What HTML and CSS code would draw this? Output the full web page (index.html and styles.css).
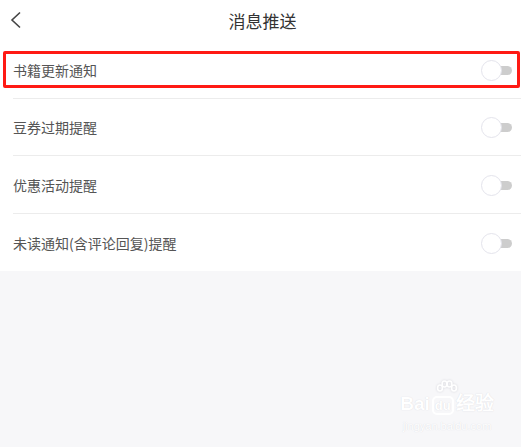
FILE: index.html
```html
<!DOCTYPE html>
<html lang="zh-CN">

<head>
    <meta charset="UTF-8">
    <meta name="viewport" content="width=device-width, initial-scale=1.0">
    <title>消息推送</title>
    <link rel="stylesheet" href="styles.css">
</head>

<body>

    <div class="page">
        <div class="header">
            <span class="back">
                <svg width="12" height="18" viewBox="0 0 12 18">
                    <path d="M10 1.5 L2 9 L10 16.5" fill="none" stroke="#444" stroke-width="1.6" />
                </svg>
            </span>
            <span class="title">消息推送</span>
        </div>

        <div class="list">
            <div class="row">
                <span class="label">书籍更新通知</span>
                <span class="switch"><i></i></span>
            </div>
            <div class="row">
                <span class="label">豆券过期提醒</span>
                <span class="switch"><i></i></span>
            </div>
            <div class="row">
                <span class="label">优惠活动提醒</span>
                <span class="switch"><i></i></span>
            </div>
            <div class="row">
                <span class="label">未读通知(含评论回复)提醒</span>
                <span class="switch"><i></i></span>
            </div>
        </div>

        <div class="highlight"></div>

        <div class="watermark">
            <span class="wm-paw">
                <svg width="22" height="16" viewBox="0 0 22 16">
                    <g fill="none" stroke="#fff" stroke-width="1.6">
                        <ellipse cx="4" cy="8" rx="2.4" ry="3" />
                        <ellipse cx="8.5" cy="4" rx="2.4" ry="3" />
                        <ellipse cx="13.5" cy="4" rx="2.4" ry="3" />
                        <ellipse cx="18" cy="8" rx="2.4" ry="3" />
                    </g>
                </svg>
            </span>
            <span class="wm-logo">Bai<b>du</b>经验</span>
            <span class="wm-url">jingyan.baidu.com</span>
        </div>
    </div>

</body>

</html>
```

FILE: styles.css
```css
html,
body {
    width: 100%;
    height: 100%;
    margin: 0px;
    overflow: hidden;
}

body {
    background-color: #f7f7f9;
    font-family: "Noto Sans CJK SC", "Noto Sans", sans-serif;
}

.page {
    position: relative;
    height: 100%;
}

.header {
    height: 41px;
    background-color: #fff;
    display: flex;
    align-items: center;
    justify-content: center;
    position: relative;
}

.header .back {
    position: absolute;
    left: 10px;
    top: 11px;
    display: flex;
}

.header .title {
    font-size: 17px;
    color: #333;
    margin-left: 4px;
}

.list {
    background-color: #fff;
    padding-left: 13px;
}

.row {
    height: 57.5px;
    display: flex;
    align-items: center;
    justify-content: space-between;
    border-bottom: 1px solid #ececec;
    padding-right: 9px;
    box-sizing: border-box;
}

.row:last-child {
    border-bottom: none;
}

.row .label {
    font-size: 14px;
    color: #555;
    margin-top: 1px;
}

.switch {
    position: relative;
    width: 31px;
    height: 9px;
    margin-top: 2px;
}

.switch::before {
    content: '';
    position: absolute;
    right: 0px;
    top: 0px;
    width: 22px;
    height: 9px;
    border-radius: 5px;
    background-color: #cdcdcd;
}

.switch i {
    position: absolute;
    left: 0px;
    top: -6px;
    width: 19px;
    height: 19px;
    border-radius: 50%;
    background-color: #fff;
    border: 1px solid #e4e4ec;
}

.highlight {
    position: absolute;
    left: 3px;
    top: 51px;
    width: 511px;
    height: 31px;
    border: 3px solid #ff1a14;
    border-radius: 2px;
}

.watermark {
    position: absolute;
    left: 400px;
    top: 380px;
    width: 94px;
    display: flex;
    flex-direction: column;
    align-items: center;
    color: #fff;
    text-shadow: 0 0 1px #d4d4da;
}

.watermark .wm-paw {
    display: flex;
    margin-bottom: -3px;
    filter: drop-shadow(0 0 1px #d4d4da);
}

.watermark .wm-logo {
    font-family: "Liberation Sans", sans-serif;
    font-size: 19px;
    font-weight: bold;
    line-height: 22px;
    white-space: nowrap;
}

.watermark .wm-logo b {
    font-size: 13px;
    border: 2px solid #fff;
    border-radius: 5px;
    padding: 0 1px;
    margin: 0 2px;
}

.watermark .wm-url {
    font-family: "Liberation Sans", sans-serif;
    font-size: 11px;
    margin-top: 3px;
}
```
